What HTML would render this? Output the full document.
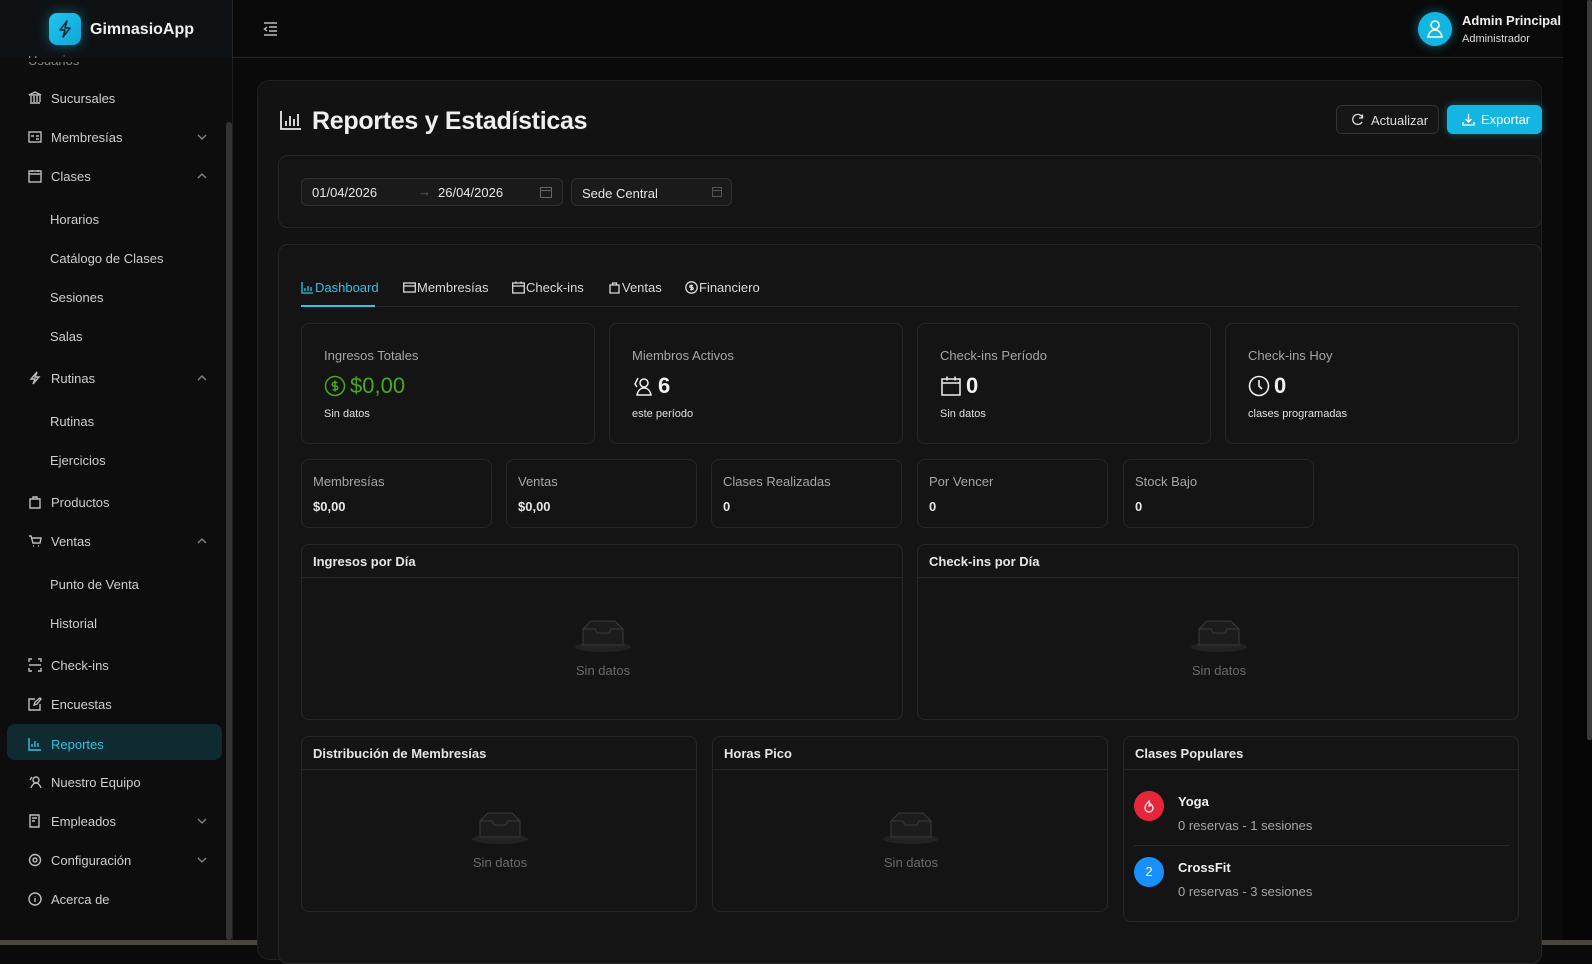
<!DOCTYPE html>
<html><head><meta charset="utf-8"><style>
*{box-sizing:border-box;margin:0;padding:0}
body{width:1592px;height:945px;overflow:hidden;background:#0a0a0a;font-family:"Liberation Sans",sans-serif;color:#e6e6e6;position:relative}
.a{position:absolute}
.side{left:0;top:0;width:233px;height:940px;background:#0d0d0d;border-right:1px solid #1e1e1e}
.si{position:absolute;left:28px;font-size:13px;color:#cfcfcf;display:flex;align-items:center;gap:9px;height:20px}
.si svg{width:14px;height:14px;stroke:#bdbdbd;fill:none;stroke-width:1.4}
.sub{left:50px}
.card{position:absolute;background:#141414;border:1px solid #262626;border-radius:8px}
.lbl{font-size:13px;color:#a6a6a6}
.big{font-size:22px;font-weight:bold;color:#f0f0f0;display:flex;align-items:center;gap:4px}
.small{font-size:11px;color:#e0e0e0}
.hd{position:absolute;left:0;right:0;top:0;height:33px;border-bottom:1px solid #262626;font-size:13px;font-weight:bold;color:#e6e6e6;padding:9px 11px}
.empty{position:absolute;text-align:center;font-size:13px;color:#6b6b6b;width:120px}
.tab{position:absolute;top:280px;font-size:13px;color:#d9d9d9;display:flex;align-items:center;gap:1px}
.tab svg{width:13px;height:13px;stroke:currentColor;fill:none;stroke-width:1.3}
</style></head><body>
<div class="a" style="left:0;top:0;width:1592px;height:58px;background:#0a0a0a;border-bottom:1px solid #262626"></div>
<div class="a" style="left:232px;top:0;width:1px;height:58px;background:#262626"></div>
<div class="a" style="left:0;top:0;width:232px;height:58px;background:#0f1214"></div>
<div class="a" style="left:49px;top:13px;width:32px;height:32px;border-radius:8px;background:linear-gradient(135deg,#22c4ee,#0fa6d6);box-shadow:0 0 12px rgba(19,194,230,.45)">
<svg width="32" height="32" viewBox="0 0 32 32"><path d="M18 8l-7 9h5l-2 7 7-9h-5z" fill="none" stroke="#0b2530" stroke-width="1.5" stroke-linejoin="round"/></svg></div>
<div class="a" style="left:90px;top:21px;font-size:16px;font-weight:bold;color:#f0f0f0">GimnasioApp</div>
<svg class="a" style="left:263px;top:22px" width="15" height="14" viewBox="0 0 15 14" fill="none" stroke="#bbb" stroke-width="1.4"><path d="M1 1h13M6 5h8M6 9h8M1 13h13M4 5L1.5 7 4 9"/></svg>
<div class="a" style="left:1418px;top:12px;width:34px;height:34px;border-radius:50%;background:#13b5e3;box-shadow:0 0 10px rgba(19,194,230,.5)">
<svg width="34" height="34" viewBox="0 0 34 34" fill="none" stroke="#fff" stroke-width="1.6"><circle cx="17" cy="13" r="4"/><path d="M10 25c1-5 4-7 7-7s6 2 7 7z"/></svg></div>
<div class="a" style="left:1462px;top:13px;font-size:13px;font-weight:bold;color:#eee">Admin Principal</div>
<div class="a" style="left:1462px;top:33px;font-size:11px;color:#ddd">Administrador</div>
<div class="a side" style="top:58px;height:882px"></div>
<div class="a" style="left:226px;top:122px;width:6px;height:818px;background:#333;border-radius:3px"></div>
<div class="si" style="top:50px;color:#888">Usuarios</div>
<div class="a" style="left:0;top:58px;width:226px;height:4px;background:#0d0d0d"></div>
<div class="si" style="top:88px"><svg viewBox="0 0 14 14"><path d="M1 4l6-3 6 3zM2 12h10M3 5v6M6 5v6M9 5v6M12 5v6"/></svg>Sucursales</div>
<div class="si" style="top:127px"><svg viewBox="0 0 14 14"><rect x="1" y="2" width="12" height="10"/><path d="M3 6h3M8 6h3M8 9h3"/></svg>Membresías</div>
<div class="si" style="top:166px"><svg viewBox="0 0 14 14"><rect x="1" y="2" width="12" height="11"/><path d="M1 5h12M4 1v2M10 1v2"/></svg>Clases</div>
<div class="si sub" style="top:209px">Horarios</div>
<div class="si sub" style="top:248px">Catálogo de Clases</div>
<div class="si sub" style="top:287px">Sesiones</div>
<div class="si sub" style="top:326px">Salas</div>
<div class="si" style="top:368px"><svg viewBox="0 0 14 14"><path d="M9 1L3 8h4l-2 5 6-7H7z"/></svg>Rutinas</div>
<div class="si sub" style="top:411px">Rutinas</div>
<div class="si sub" style="top:450px">Ejercicios</div>
<div class="si" style="top:492px"><svg viewBox="0 0 14 14"><path d="M2 4h10v9H2zM5 4V2h4v2"/></svg>Productos</div>
<div class="si" style="top:531px"><svg viewBox="0 0 14 14"><path d="M1 2h2l2 7h7l1-5H4M5 12h1M10 12h1"/></svg>Ventas</div>
<div class="si sub" style="top:574px">Punto de Venta</div>
<div class="si sub" style="top:613px">Historial</div>
<div class="si" style="top:655px"><svg viewBox="0 0 14 14"><path d="M1 4V1h3M10 1h3v3M13 10v3h-3M4 13H1v-3M1 7h12"/></svg>Check-ins</div>
<div class="si" style="top:694px"><svg viewBox="0 0 14 14"><path d="M12 7v6H1V2h6M6 8l1-3 5-4 1 1-4 5z"/></svg>Encuestas</div>
<div class="a" style="left:7px;top:724px;width:215px;height:36px;background:#0f2a30;border-radius:8px"></div>
<div class="si" style="top:734px;color:#2fc4e8"><svg viewBox="0 0 14 14" style="stroke:#2fc4e8"><path d="M1 1v12h12M4 10V7M7 10V4M10 10V6"/></svg>Reportes</div>
<div class="si" style="top:772px"><svg viewBox="0 0 14 14"><circle cx="8" cy="5" r="3"/><path d="M3 13c1-3 3-5 5-5s4 2 5 5M4 2L2 5"/></svg>Nuestro Equipo</div>
<div class="si" style="top:811px"><svg viewBox="0 0 14 14"><path d="M2 1h9v12H2zM4 4h5M4 7h3"/></svg>Empleados</div>
<div class="si" style="top:850px"><svg viewBox="0 0 14 14"><circle cx="7" cy="7" r="2"/><circle cx="7" cy="7" r="5.5"/></svg>Configuración</div>
<div class="si" style="top:889px"><svg viewBox="0 0 14 14"><circle cx="7" cy="7" r="6"/><path d="M7 6v4M7 4v.5"/></svg>Acerca de</div>
<svg class="a" style="left:197px;top:133px" width="10" height="8" viewBox="0 0 10 8" fill="none" stroke="#888" stroke-width="1.3"><path d="M1 2l4 4 4-4"/></svg>
<svg class="a" style="left:197px;top:172px" width="10" height="8" viewBox="0 0 10 8" fill="none" stroke="#888" stroke-width="1.3"><path d="M1 6l4-4 4 4"/></svg>
<svg class="a" style="left:197px;top:374px" width="10" height="8" viewBox="0 0 10 8" fill="none" stroke="#888" stroke-width="1.3"><path d="M1 6l4-4 4 4"/></svg>
<svg class="a" style="left:197px;top:537px" width="10" height="8" viewBox="0 0 10 8" fill="none" stroke="#888" stroke-width="1.3"><path d="M1 6l4-4 4 4"/></svg>
<svg class="a" style="left:197px;top:817px" width="10" height="8" viewBox="0 0 10 8" fill="none" stroke="#888" stroke-width="1.3"><path d="M1 2l4 4 4-4"/></svg>
<svg class="a" style="left:197px;top:856px" width="10" height="8" viewBox="0 0 10 8" fill="none" stroke="#888" stroke-width="1.3"><path d="M1 2l4 4 4-4"/></svg>
<div class="a" style="left:1563px;top:0;width:29px;height:940px;background:#050505"></div>
<div class="a" style="left:1587px;top:0;width:5px;height:740px;background:#3a3a3a;border-radius:2px"></div>
<div class="a" style="left:0;top:940px;width:1592px;height:5px;background:#4a453f"></div>
<div class="a" style="left:257px;top:80px;width:1285px;height:880px;background:#121212;border:1px solid #1f1f1f;border-radius:12px"></div>
<svg class="a" style="left:280px;top:110px" width="22" height="20" viewBox="0 0 22 20" fill="none" stroke="#e8e8e8" stroke-width="1.8"><path d="M1 1v18h20M6 16v-5M10 16V6M14 16v-7M18 16V4"/></svg>
<div class="a" style="left:312px;top:107px;font-size:25px;font-weight:bold;color:#f0f0f0;letter-spacing:-0.3px">Reportes y Estadísticas</div>
<div class="a" style="left:1336px;top:105px;width:103px;height:29px;border:1px solid #333;border-radius:6px;background:#161616;font-size:13px;color:#ddd;padding:7px 0 0 34px">Actualizar</div>
<svg class="a" style="left:1351px;top:113px" width="13" height="13" viewBox="0 0 13 13" fill="none" stroke="#ddd" stroke-width="1.3"><path d="M11.5 5A5 5 0 1 0 11 9"/><path d="M11.5 1.5V5H8"/></svg>
<div class="a" style="left:1447px;top:105px;width:95px;height:29px;border-radius:6px;background:#13b5e3;box-shadow:0 0 8px rgba(19,194,230,.4);font-size:13px;color:#fff;padding:7px 0 0 34px">Exportar</div>
<svg class="a" style="left:1462px;top:113px" width="13" height="13" viewBox="0 0 13 13" fill="none" stroke="#fff" stroke-width="1.3"><path d="M6.5 1v8M3.5 6l3 3 3-3M1 9v3h11V9"/></svg>
<div class="card" style="left:278px;top:155px;width:1264px;height:73px;border-radius:10px;background:#141414"></div>
<div class="a" style="left:301px;top:178px;width:262px;height:28px;border:1px solid #303030;border-radius:6px;background:#1a1a1a"></div>
<div class="a" style="left:312px;top:185px;font-size:13px;color:#e6e6e6">01/04/2026</div>
<div class="a" style="left:418px;top:184px;font-size:13px;color:#666">→</div>
<div class="a" style="left:438px;top:185px;font-size:13px;color:#e6e6e6">26/04/2026</div>
<svg class="a" style="left:540px;top:186px" width="12" height="12" viewBox="0 0 12 12" fill="none" stroke="#666"><rect x=".5" y="1.5" width="11" height="10"/><path d="M.5 4.5h11"/></svg>
<div class="a" style="left:571px;top:178px;width:161px;height:28px;border:1px solid #303030;border-radius:6px;background:#1a1a1a;font-size:13px;color:#e6e6e6;padding:7px 10px">Sede Central</div>
<svg class="a" style="left:712px;top:187px" width="10" height="10" viewBox="0 0 10 10" fill="none" stroke="#555"><rect x=".5" y=".5" width="9" height="9"/><path d="M.5 3.5h9"/></svg>
<div class="card" style="left:278px;top:244px;width:1264px;height:720px;border-radius:10px;background:#141414"></div>
<div class="a" style="left:301px;top:306px;width:1218px;height:1px;background:#262626"></div>
<div class="a" style="left:301px;top:305px;width:74px;height:2px;background:#2fc4e8"></div>
<div class="tab" style="left:301px;color:#2fc4e8"><svg viewBox="0 0 13 13"><path d="M1 1v11h11M4 10V7M7 10V5M10 10V6"/></svg>Dashboard</div>
<div class="tab" style="left:403px"><svg viewBox="0 0 13 13"><rect x=".7" y="2" width="11.6" height="9"/><path d="M.7 5h11.6"/></svg>Membresías</div>
<div class="tab" style="left:512px"><svg viewBox="0 0 13 13"><rect x=".7" y="2" width="11.6" height="10"/><path d="M.7 5h11.6M4 .5v2M9 .5v2"/></svg>Check-ins</div>
<div class="tab" style="left:608px"><svg viewBox="0 0 13 13"><path d="M2 4h9v8H2zM4.5 4V2h4v2"/></svg>Ventas</div>
<div class="tab" style="left:685px"><svg viewBox="0 0 13 13"><circle cx="6.5" cy="6.5" r="5.7"/><path d="M8 4.5H5.8a1 1 0 0 0 0 2h1.4a1 1 0 0 1 0 2H5M6.5 3.5v6"/></svg>Financiero</div>
<div class="card" style="left:301px;top:323px;width:294px;height:121px"><div class="lbl a" style="left:22px;top:24px">Ingresos Totales</div>
<div class="big a" style="left:22px;top:49px;color:#49aa19;font-weight:normal"><svg width="22" height="22" viewBox="0 0 22 22" fill="none" stroke="#49aa19" stroke-width="1.5"><circle cx="11" cy="11" r="9.5"/><path d="M13.5 7.5H10a1.8 1.8 0 0 0 0 3.6h2a1.8 1.8 0 0 1 0 3.6H8.5M11 5.5v11"/></svg>$0,00</div>
<div class="small a" style="left:22px;top:84px">Sin datos</div></div>
<div class="card" style="left:609px;top:323px;width:294px;height:121px"><div class="lbl a" style="left:22px;top:24px">Miembros Activos</div>
<div class="big a" style="left:22px;top:49px"><svg width="22" height="22" viewBox="0 0 22 22" fill="none" stroke="#eee" stroke-width="1.5"><circle cx="12" cy="8" r="4"/><path d="M5 20c1-5 4-7 7-7s6 2 7 7zM6 3L3 9l2 3"/></svg>6</div>
<div class="small a" style="left:22px;top:84px">este período</div></div>
<div class="card" style="left:917px;top:323px;width:294px;height:121px"><div class="lbl a" style="left:22px;top:24px">Check-ins Período</div>
<div class="big a" style="left:22px;top:49px"><svg width="22" height="22" viewBox="0 0 22 22" fill="none" stroke="#eee" stroke-width="1.5"><rect x="2" y="4" width="18" height="16"/><path d="M2 8h18M7 1.5v4M15 1.5v4"/></svg>0</div>
<div class="small a" style="left:22px;top:84px">Sin datos</div></div>
<div class="card" style="left:1225px;top:323px;width:294px;height:121px"><div class="lbl a" style="left:22px;top:24px">Check-ins Hoy</div>
<div class="big a" style="left:22px;top:49px"><svg width="22" height="22" viewBox="0 0 22 22" fill="none" stroke="#eee" stroke-width="1.6"><circle cx="11" cy="11" r="9.5"/><path d="M11 5v6l3 3"/></svg>0</div>
<div class="small a" style="left:22px;top:84px">clases programadas</div></div>
<div class="card" style="left:301px;top:459px;width:191px;height:69px"><div class="lbl a" style="left:11px;top:14px">Membresías</div><div class="a" style="left:11px;top:39px;font-size:13px;font-weight:bold">$0,00</div></div>
<div class="card" style="left:506px;top:459px;width:191px;height:69px"><div class="lbl a" style="left:11px;top:14px">Ventas</div><div class="a" style="left:11px;top:39px;font-size:13px;font-weight:bold">$0,00</div></div>
<div class="card" style="left:711px;top:459px;width:191px;height:69px"><div class="lbl a" style="left:11px;top:14px">Clases Realizadas</div><div class="a" style="left:11px;top:39px;font-size:13px;font-weight:bold">0</div></div>
<div class="card" style="left:917px;top:459px;width:191px;height:69px"><div class="lbl a" style="left:11px;top:14px">Por Vencer</div><div class="a" style="left:11px;top:39px;font-size:13px;font-weight:bold">0</div></div>
<div class="card" style="left:1123px;top:459px;width:191px;height:69px"><div class="lbl a" style="left:11px;top:14px">Stock Bajo</div><div class="a" style="left:11px;top:39px;font-size:13px;font-weight:bold">0</div></div>
<div class="card" style="left:301px;top:544px;width:602px;height:176px"><div class="hd">Ingresos por Día</div>
<svg class="a" style="left:271px;top:70px" width="60" height="40" viewBox="0 0 60 40"><ellipse cx="30" cy="32" rx="28" ry="5" fill="#222"/><path d="M10 14l8-8h24l8 8v16H10z" fill="#1c1c1c" stroke="#3a3a3a"/><path d="M10 14h12l2 4h12l2-4h12" fill="none" stroke="#3a3a3a"/></svg>
<div class="empty" style="left:241px;top:118px">Sin datos</div></div>
<div class="card" style="left:917px;top:544px;width:602px;height:176px"><div class="hd">Check-ins por Día</div>
<svg class="a" style="left:271px;top:70px" width="60" height="40" viewBox="0 0 60 40"><ellipse cx="30" cy="32" rx="28" ry="5" fill="#222"/><path d="M10 14l8-8h24l8 8v16H10z" fill="#1c1c1c" stroke="#3a3a3a"/><path d="M10 14h12l2 4h12l2-4h12" fill="none" stroke="#3a3a3a"/></svg>
<div class="empty" style="left:241px;top:118px">Sin datos</div></div>
<div class="card" style="left:301px;top:736px;width:396px;height:176px"><div class="hd">Distribución de Membresías</div>
<svg class="a" style="left:168px;top:70px" width="60" height="40" viewBox="0 0 60 40"><ellipse cx="30" cy="32" rx="28" ry="5" fill="#222"/><path d="M10 14l8-8h24l8 8v16H10z" fill="#1c1c1c" stroke="#3a3a3a"/><path d="M10 14h12l2 4h12l2-4h12" fill="none" stroke="#3a3a3a"/></svg>
<div class="empty" style="left:138px;top:118px">Sin datos</div></div>
<div class="card" style="left:712px;top:736px;width:396px;height:176px"><div class="hd">Horas Pico</div>
<svg class="a" style="left:168px;top:70px" width="60" height="40" viewBox="0 0 60 40"><ellipse cx="30" cy="32" rx="28" ry="5" fill="#222"/><path d="M10 14l8-8h24l8 8v16H10z" fill="#1c1c1c" stroke="#3a3a3a"/><path d="M10 14h12l2 4h12l2-4h12" fill="none" stroke="#3a3a3a"/></svg>
<div class="empty" style="left:138px;top:118px">Sin datos</div></div>
<div class="card" style="left:1123px;top:736px;width:396px;height:186px"><div class="hd">Clases Populares</div>
<div class="a" style="left:10px;top:54px;width:30px;height:30px;border-radius:50%;background:#e8263a"><svg width="30" height="30" viewBox="0 0 30 30" fill="none" stroke="#fff" stroke-width="1.2"><path d="M15 10c-3 3-4 5-4 7a4 4 0 0 0 8 0c0-2-1-3-2-4 0 2-1 2-2 2 1-2 0-4 0-5z"/></svg></div>
<div class="a" style="left:54px;top:57px;font-size:13px;font-weight:bold;color:#f0f0f0">Yoga</div>
<div class="a" style="left:54px;top:81px;font-size:13px;color:#a6a6a6">0 reservas - 1 sesiones</div>
<div class="a" style="left:10px;top:108px;width:376px;height:1px;background:#262626"></div>
<div class="a" style="left:10px;top:120px;width:30px;height:30px;border-radius:50%;background:#1890ff;color:#fff;font-size:13px;text-align:center;line-height:30px">2</div>
<div class="a" style="left:54px;top:123px;font-size:13px;font-weight:bold;color:#f0f0f0">CrossFit</div>
<div class="a" style="left:54px;top:147px;font-size:13px;color:#a6a6a6">0 reservas - 3 sesiones</div></div>
</body></html>
